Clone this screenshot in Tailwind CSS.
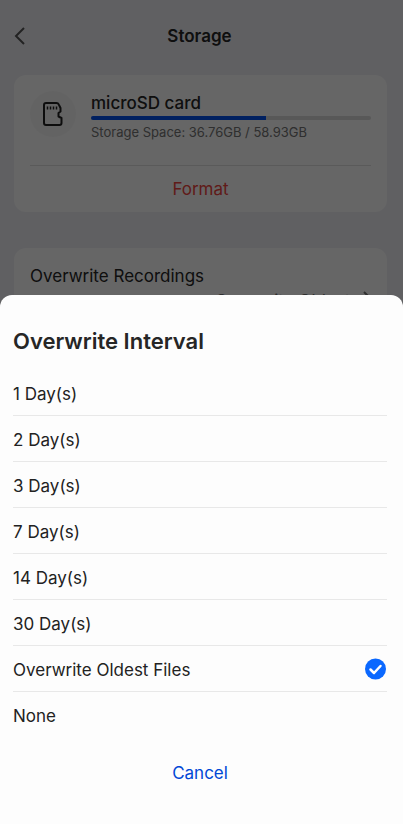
<!DOCTYPE html>
<html lang="en">
<head>
    <meta charset="UTF-8">
    <meta name="viewport" content="width=device-width, initial-scale=1.0">
    <title>Storage</title>
    <script src="https://cdn.jsdelivr.net/npm/@tailwindcss/browser@4"></script>
</head>
<body class="bg-[#f1f1f6] font-[Inter,sans-serif] text-[#262626] h-screen overflow-hidden">
    <header class="grid grid-cols-[40px_1fr_40px] items-center pt-4 pr-1 h-14">
        <button type="button" aria-label="Back" class="pl-3">
            <svg class="w-4 h-5" viewBox="0 0 16 20" fill="none" stroke="#555" stroke-width="2"><path d="M12 2 4 10l8 8"/></svg>
        </button>
        <h1 class="text-center text-[17px] leading-6 font-semibold">Storage</h1>
    </header>

    <main class="pl-[14px] pr-4 pt-[19px]">
        <section class="bg-white rounded-xl px-4">
            <div class="flex gap-[15px] pt-4 pb-[23px] border-b border-[#e2e2e2]">
                <div class="w-[46px] h-[46px] rounded-full bg-[#f8f8f8] flex items-center justify-center shrink-0">
                    <svg class="w-6 h-6" viewBox="0 0 24 24" fill="none" stroke="#222" stroke-width="2" stroke-linejoin="round">
                        <path d="M5 1h10.500c1 0 1.800.5 2.200 1.400L19.500 6v3.500l-2 1.500v3.500l3 1.500v5a2 2 0 0 1-2 2H5a2 2 0 0 1-2-2V3a2 2 0 0 1 2-2z"/>
                        <path d="M6.500 4.500v3M9.500 4.500v3M12.500 4.500v3M15.500 4.500v3" stroke-width="1.500"/>
                    </svg>
                </div>
                <div class="flex-1">
                    <h2 class="pb-px text-[17px] leading-6 font-medium">microSD card</h2>
                    <div role="progressbar" aria-label="Storage used" aria-valuenow="62" class="h-1 rounded-full bg-[#dcdcdc] overflow-hidden">
                        <div class="h-full bg-[#0050f0]" style="width: 62.4%"></div>
                    </div>
                    <p class="pt-0.5 text-[13px] leading-5 text-[#757575]">Storage Space: 36.76GB / 58.93GB</p>
                </div>
            </div>
            <button type="button" class="w-full h-[46px] pt-0.5 text-[17px] text-[#f04540]">Format</button>
        </section>

        <section class="bg-white rounded-xl px-4 py-4 mt-9">
            <h2 class="text-[17px] leading-6">Overwrite Recordings</h2>
            <button type="button" class="ml-auto flex items-start gap-1 text-[17px] leading-6 text-[#757575]">
                <span class="w-36 pt-px text-left">Overwrite Oldest Files</span>
                <svg class="w-2 h-4 mt-0.5" viewBox="0 0 8 16" fill="none" stroke="#757575" stroke-width="2"><path d="m1 2 6 6-6 6"/></svg>
            </button>
        </section>
    </main>

    <div class="fixed inset-0 bg-black/60"></div>

    <form class="fixed inset-x-0 bottom-0 bg-[#fdfdfd] rounded-t-xl pl-[13px] pr-4 pt-[30px] pb-[26px]">
        <fieldset>
            <legend class="text-[22px] leading-8 font-semibold mb-[13px]">Overwrite Interval</legend>
            <div class="divide-y divide-[#e8e8e8] text-[17px] text-[#222]">
                <label class="flex items-center justify-between h-[46px] pt-1">1 Day(s)
                    <input type="radio" name="interval" class="appearance-none">
                </label>
                <label class="flex items-center justify-between h-[46px] pt-1">2 Day(s)
                    <input type="radio" name="interval" class="appearance-none">
                </label>
                <label class="flex items-center justify-between h-[46px] pt-1">3 Day(s)
                    <input type="radio" name="interval" class="appearance-none">
                </label>
                <label class="flex items-center justify-between h-[46px] pt-1">7 Day(s)
                    <input type="radio" name="interval" class="appearance-none">
                </label>
                <label class="flex items-center justify-between h-[46px] pt-1">14 Day(s)
                    <input type="radio" name="interval" class="appearance-none">
                </label>
                <label class="flex items-center justify-between h-[46px] pt-1">30 Day(s)
                    <input type="radio" name="interval" class="appearance-none">
                </label>
                <label class="flex items-center justify-between h-[46px] pt-1">Overwrite Oldest Files
                    <input type="radio" name="interval" class="peer appearance-none" checked>
                    <svg class="w-6 h-6 mb-1 hidden peer-checked:block" viewBox="0 0 24 24" fill="none">
                        <circle cx="12.500" cy="12" r="10.500" fill="#0a68ff"/>
                        <path d="m7.500 12.500 3.500 3.500 6.500-7" stroke="#fff" stroke-width="2.500" stroke-linecap="round" stroke-linejoin="round"/>
                    </svg>
                </label>
                <label class="flex items-center justify-between h-[46px] pt-1">None
                    <input type="radio" name="interval" class="appearance-none">
                </label>
            </div>
        </fieldset>
        <button type="button" class="block w-full mt-3 h-12 text-[17px] text-[#0047d6]">Cancel</button>
    </form>
</body>
</html>
